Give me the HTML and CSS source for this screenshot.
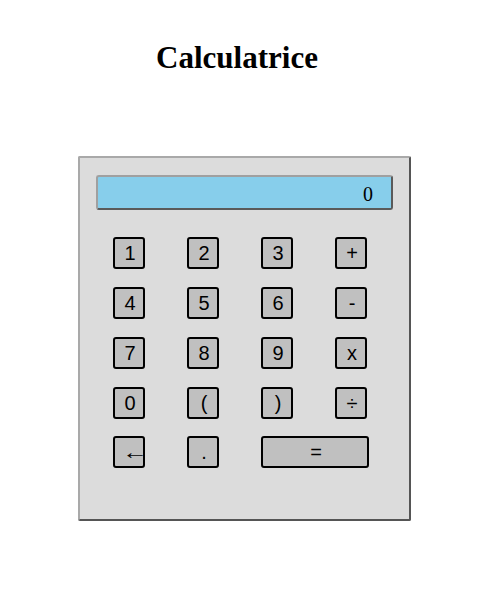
FILE: index.html
```html
<!DOCTYPE html>
<html lang="fr">
<head>
<meta charset="utf-8">
<title>Calculatrice</title>
<link rel="stylesheet" href="styles.css">
</head>
<body>
<h1 class="title">Calculatrice</h1>
<div class="calc">
  <div class="display">0</div>
  <div class="keys">
    <button class="key">1</button>
    <button class="key">2</button>
    <button class="key">3</button>
    <button class="key">+</button>
    <button class="key">4</button>
    <button class="key">5</button>
    <button class="key">6</button>
    <button class="key">-</button>
    <button class="key">7</button>
    <button class="key">8</button>
    <button class="key">9</button>
    <button class="key">x</button>
    <button class="key">0</button>
    <button class="key">(</button>
    <button class="key">)</button>
    <button class="key">÷</button>
    <button class="key key-back"><span class="arrow">←</span></button>
    <button class="key">.</button>
    <button class="key key-eq">=</button>
  </div>
</div>
</body>
</html>
```
FILE: styles.css
```css
html, body {
  margin: 0;
  padding: 0;
  background: #ffffff;
}
body {
  font-family: "Liberation Serif", "Times New Roman", serif;
}
.title {
  margin: 39px 24px 0 0;
  font-size: 31px;
  line-height: 37px;
  font-weight: bold;
  text-align: center;
  color: #000;
}
.calc {
  box-sizing: border-box;
  margin: 80px 0 0 78px;
  width: 333px;
  height: 365px;
  background: #dcdcdc;
  border: 2px solid;
  border-color: #a9a9a9 #555555 #555555 #a9a9a9;
  border-radius: 2px;
  padding: 17px 0 0 16px;
}
.display {
  box-sizing: border-box;
  width: 297px;
  height: 35px;
  background: #87ceeb;
  border: 2px solid;
  border-color: #a0a0a0 #5a5a5a #5a5a5a #a0a0a0;
  border-radius: 3px;
  font-family: "Liberation Serif", serif;
  font-size: 20px;
  line-height: 34px;
  text-align: right;
  padding-right: 18px;
  color: #000;
}
.keys {
  display: grid;
  grid-template-columns: repeat(4, 74px);
  grid-template-rows: 32px 32px 32px 32px 32px;
  row-gap: 18px;
  margin: 27px 0 0 -4px;
}
.keys .key:nth-child(n+17) {
  margin-top: -1px;
}
.key {
  box-sizing: border-box;
  justify-self: center;
  width: 32px;
  height: 32px;
  padding: 1px 5px 1px 7px;
  background: #c0c0c0;
  border: 2px solid #000;
  border-radius: 3px;
  font-family: "Liberation Sans", Arial, sans-serif;
  font-size: 20px;
  color: #000;
  cursor: pointer;
}
.key-back {
  padding: 1px 0 1px 7px;
  text-align: left;
}
.arrow {
  display: inline-block;
  transform: scaleX(1.3);
  transform-origin: left center;
}
.key-eq {
  grid-column: span 2;
  width: 108px;
  margin-left: 2px;
}
```
